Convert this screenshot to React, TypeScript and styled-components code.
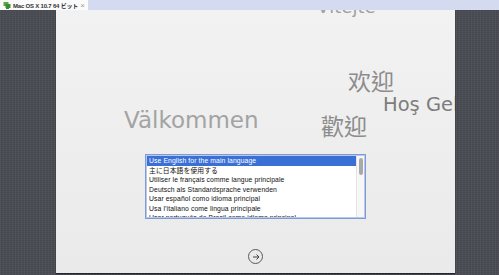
import styled, { createGlobalStyle } from "styled-components"

const GlobalStyle = createGlobalStyle`
  html, body {
    margin: 0;
    padding: 0;
    overflow: hidden;
  }
  body {
    font-family: "DejaVu Sans", "Noto Sans CJK SC", sans-serif;
  }
`

const Screen = styled.div`
  width: 499px;
  height: 275px;
  display: flex;
  flex-direction: column;
  background-color: #4b4d55;
  background-image: repeating-linear-gradient(
      90deg,
      rgba(255, 255, 255, 0.035) 0px,
      rgba(255, 255, 255, 0.035) 1px,
      transparent 1px,
      transparent 3px
    ),
    repeating-linear-gradient(
      0deg,
      rgba(0, 0, 0, 0.06) 0px,
      rgba(0, 0, 0, 0.06) 1px,
      transparent 1px,
      transparent 2px
    );
  overflow: hidden;
`

const TabBar = styled.div`
  height: 10px;
  flex: none;
  display: flex;
  background: #d4dbf0;
  position: relative;
  z-index: 2;
`

const Tab = styled.div`
  width: 88px;
  height: 10px;
  background: #fbfbfb;
  display: flex;
  align-items: center;
  gap: 2px;
  padding: 0 3px;
  box-sizing: border-box;
  font-family: "Liberation Sans", "Noto Sans CJK JP", sans-serif;
  font-size: 6px;
  font-weight: bold;
  color: #333;
  white-space: nowrap;
`

const TabLabel = styled.span`
  flex: 1;
  letter-spacing: -0.2px;
`

const TabClose = styled.span`
  color: #999;
  font-weight: normal;
  font-size: 8px;
`

const Stage = styled.div`
  flex: 1;
  display: flex;
  padding: 0 44px 2px 56px;
  min-height: 0;
`

const Panel = styled.div`
  flex: 1;
  position: relative;
  overflow: hidden;
  background: linear-gradient(#f2f2f2, #eaeaea);
  box-shadow: 0 1px 1px rgba(0, 0, 0, 0.5);
  display: flex;
  flex-direction: column;
  align-items: center;
  padding-top: 144px;
  box-sizing: border-box;
`

const Word = styled.span<{ $x: number; $y: number; $size: number; $color?: string }>`
  position: absolute;
  left: ${p => p.$x}px;
  top: ${p => p.$y}px;
  font-size: ${p => p.$size}px;
  line-height: 1;
  color: ${p => p.$color || "#8c8c8c"};
  white-space: nowrap;
  font-family: "DejaVu Sans", "Noto Sans CJK TC", "Noto Sans CJK SC", sans-serif;
`

const ListBox = styled.div`
  width: 221px;
  height: 65px;
  box-sizing: border-box;
  border: 1px solid #7f9bd6;
  box-shadow: inset 0 0 0 1px #b9c9ec;
  background: #fff;
  display: flex;
  padding: 1px;
  overflow: hidden;
`

const Rows = styled.div`
  flex: 1;
  overflow: hidden;
`

const Row = styled.div<{ $selected?: boolean }>`
  height: 9.5px;
  line-height: 9.5px;
  padding-left: 2px;
  font-family: "Liberation Sans", "Noto Sans CJK JP", sans-serif;
  font-size: 6.8px;
  letter-spacing: 0.1px;
  white-space: nowrap;
  color: ${p => (p.$selected ? "#fff" : "#111")};
  background: ${p => (p.$selected ? "#3a6fd6" : "transparent")};
`

const ScrollTrack = styled.div`
  width: 8px;
  flex: none;
  border-left: 1px solid #e2e2e2;
  background: #f7f7f7;
  padding: 2px 1px 0 2px;
  box-sizing: border-box;
`

const ScrollThumb = styled.div`
  width: 4px;
  height: 17px;
  border-radius: 2px;
  background: #a9a9a9;
`

const NextButton = styled.div`
  margin-top: 30px;
  width: 13px;
  height: 13px;
  border: 1px solid #5a5a5a;
  border-radius: 50%;
  display: flex;
  align-items: center;
  justify-content: center;
`

const languages = [
  "Use English for the main language",
  "主に日本語を使用する",
  "Utiliser le français comme langue principale",
  "Deutsch als Standardsprache verwenden",
  "Usar español como idioma principal",
  "Usa l’italiano come lingua principale",
  "Usar português do Brasil como idioma principal",
  "Gebruik Nederlands als hoofdtaal"
]

function VmIcon() {
  return (
    <svg width="8" height="8" viewBox="0 0 8 8">
      <rect x="0.5" y="1" width="5" height="4" fill="#5aa84a" />
      <rect x="2.5" y="3" width="5" height="4" fill="#3d8c34" />
      <rect x="3" y="7" width="3" height="1" fill="#3d8c34" />
    </svg>
  )
}

export default function App() {
  return (
    <>
      <GlobalStyle />
      <Screen>
        <TabBar>
          <Tab>
            <VmIcon />
            <TabLabel>Mac OS X 10.7 64 ビット</TabLabel>
            <TabClose>×</TabClose>
          </Tab>
        </TabBar>
        <Stage>
          <Panel>
            <Word $x={261} $y={-12} $size={18} $color="#a0a0a0">
              Vítejte
            </Word>
            <Word $x={292} $y={61} $size={23}>
              欢迎
            </Word>
            <Word $x={327} $y={85} $size={19.5} $color="#7d7d7d">
              Hoş Geldiniz
            </Word>
            <Word $x={265} $y={106} $size={23}>
              歡迎
            </Word>
            <Word $x={68} $y={99} $size={23} $color="#a3a3a3">
              Välkommen
            </Word>
            <ListBox>
              <Rows>
                {languages.map((lang, i) => (
                  <Row key={i} $selected={i === 0}>
                    {lang}
                  </Row>
                ))}
              </Rows>
              <ScrollTrack>
                <ScrollThumb />
              </ScrollTrack>
            </ListBox>
            <NextButton>
              <svg width="8" height="8" viewBox="0 0 8 8">
                <path
                  d="M1 4 H7 M4.5 1.5 L7 4 L4.5 6.5"
                  stroke="#444"
                  strokeWidth="1"
                  fill="none"
                />
              </svg>
            </NextButton>
          </Panel>
        </Stage>
      </Screen>
    </>
  )
}
